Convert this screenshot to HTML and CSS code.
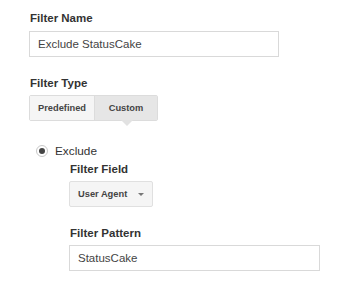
FILE: index.html
```html
<!DOCTYPE html>
<html lang="en">
<head>
  <meta charset="UTF-8">
  <title>Filter</title>
  <link rel="stylesheet" href="styles.css">
</head>
<body>
<div class="filter-form">
  <div class="label">Filter Name</div>
  <div class="text-box name-box">Exclude StatusCake</div>

  <div class="label type-label">Filter Type</div>
  <div class="tabs">
    <div class="tab">Predefined</div>
    <div class="tab active">Custom</div>
  </div>

  <div class="radio-row">
    <span class="radio"><span class="dot"></span></span>
    <span class="radio-text">Exclude</span>
  </div>

  <div class="sub">
    <div class="label">Filter Field</div>
    <div class="select">User Agent <span class="arrow"></span></div>

    <div class="label pattern-label">Filter Pattern</div>
    <div class="text-box pattern-box">StatusCake</div>
  </div>
</div>
</body>
</html>
```

FILE: styles.css
```css
body {
  margin: 0;
  background: #fff;
  font-family: "Liberation Sans", Arial, sans-serif;
  color: #333;
}
.filter-form {
  padding: 11px 0 0 29px;
}
.label {
  font-size: 11.5px;
  font-weight: bold;
  line-height: 14px;
  color: #333;
  padding-left: 1px;
}
.text-box {
  box-sizing: border-box;
  height: 26px;
  border: 1px solid #d9d9d9;
  padding-left: 8px;
  font-size: 11.5px;
  line-height: 24px;
  color: #444;
  margin-top: 6px;
}
.name-box {
  width: 250px;
}
.type-label {
  margin-top: 19px;
}
.tabs {
  display: flex;
  margin-top: 5px;
  width: fit-content;
  border: 1px solid #dcdcdc;
  border-radius: 2px;
}
.tab {
  box-sizing: border-box;
  height: 24px;
  line-height: 24px;
  font-size: 9.3px;
  font-weight: bold;
  color: #444;
  text-align: center;
  background: #f5f5f5;
  width: 64px;
}
.tab.active {
  width: 63px;
  background: #e6e6e6;
  border-left: 1px solid #dcdcdc;
  position: relative;
}
.tab.active::after {
  content: "";
  position: absolute;
  left: 26px;
  top: 24px;
  border-left: 6px solid transparent;
  border-right: 6px solid transparent;
  border-top: 6px solid #e2e2e2;
}
.radio-row {
  display: flex;
  align-items: center;
  margin-top: 23px;
  padding-left: 7px;
  height: 14px;
}
.radio {
  box-sizing: border-box;
  width: 12px;
  height: 12px;
  border: 1px solid #c8c8c8;
  border-radius: 50%;
  display: flex;
  align-items: center;
  justify-content: center;
}
.dot {
  width: 6px;
  height: 6px;
  border-radius: 50%;
  background: #444;
}
.radio-text {
  font-size: 11.8px;
  color: #333;
  margin-left: 7px;
}
.sub {
  padding-left: 40px;
  margin-top: 4px;
}
.select {
  box-sizing: border-box;
  display: flex;
  align-items: center;
  justify-content: space-between;
  width: 84px;
  height: 26px;
  margin-top: 5px;
  padding: 0 8px 0 8px;
  background: #f5f5f5;
  border: 1px solid #e0e0e0;
  border-radius: 2px;
  font-size: 9.3px;
  font-weight: bold;
  color: #444;
}
.arrow {
  border-left: 3px solid transparent;
  border-right: 3px solid transparent;
  border-top: 3px solid #777;
  margin-top: 1px;
}
.pattern-label {
  margin-top: 19px;
}
.pattern-box {
  width: 251px;
  margin-top: 5px;
}
```
